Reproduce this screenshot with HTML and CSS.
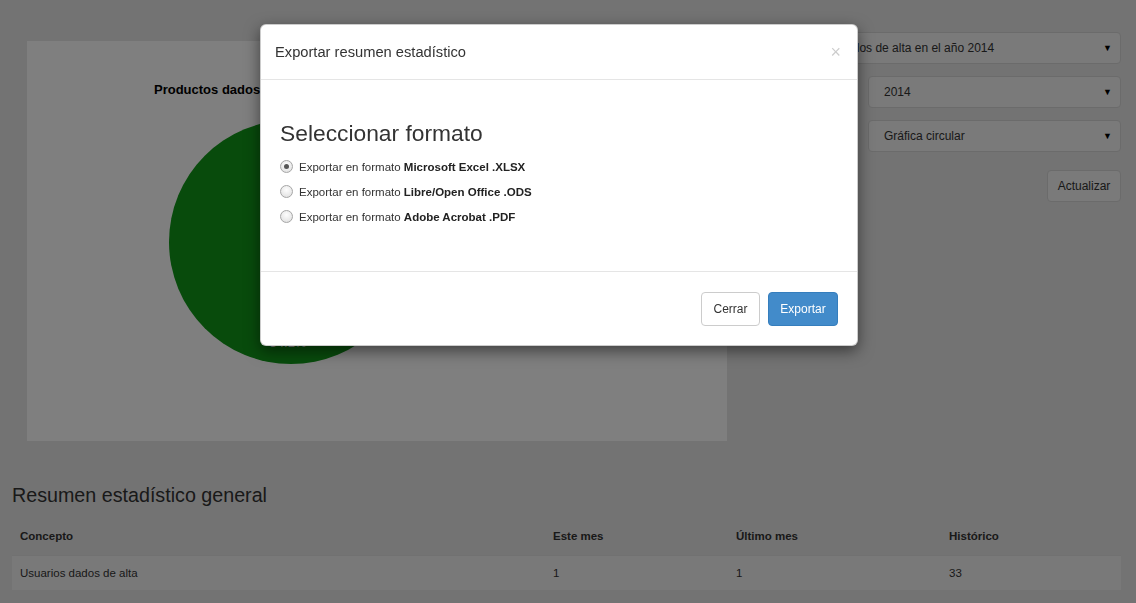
FILE: index.html
```html
<!DOCTYPE html>
<html lang="es">
<head>
<meta charset="utf-8">
<title>Resumen estadístico</title>
<link rel="stylesheet" href="styles.css">
</head>
<body>
<div class="page">
  <div class="top">
    <div class="chart-panel">
      <div class="chart-title">Productos dados de alta en el año 2014</div>
      <svg class="pie" width="700" height="300" viewBox="0 0 700 300">
        <circle cx="264" cy="120" r="122" fill="#109618"/>
        <text x="261" y="225" class="pie-label">34.1%</text>
      </svg>
    </div>
    <div class="side">
      <div class="select wide"><span>Productos dados de alta en el año 2014</span><span class="arrow">&#9660;</span></div>
      <div class="select"><span>2014</span><span class="arrow">&#9660;</span></div>
      <div class="select"><span>Gráfica circular</span><span class="arrow">&#9660;</span></div>
      <div class="btn-gray">Actualizar</div>
    </div>
  </div>
  <h2 class="summary-title">Resumen estadístico general</h2>
  <table class="stats">
    <thead>
      <tr><th class="c1">Concepto</th><th class="c2">Este mes</th><th class="c3">Último mes</th><th class="c4">Histórico</th></tr>
    </thead>
    <tbody>
      <tr class="striped"><td>Usuarios dados de alta</td><td>1</td><td>1</td><td>33</td></tr>
    </tbody>
  </table>
</div>

<div class="backdrop"></div>

<div class="modal">
  <div class="modal-header">
    <span class="close">&times;</span>
    <span class="modal-title">Exportar resumen estadístico</span>
  </div>
  <div class="modal-body">
    <h3 class="format-title">Seleccionar formato</h3>
    <div class="options">
      <label class="option"><span class="radio checked"></span><span>Exportar en formato <b>Microsoft Excel .XLSX</b></span></label>
      <label class="option"><span class="radio"></span><span>Exportar en formato <b>Libre/Open Office .ODS</b></span></label>
      <label class="option"><span class="radio"></span><span>Exportar en formato <b>Adobe Acrobat .PDF</b></span></label>
    </div>
  </div>
  <div class="modal-footer">
    <span class="btn btn-default">Cerrar</span>
    <span class="btn btn-primary">Exportar</span>
  </div>
</div>
</body>
</html>
```
FILE: styles.css
```css
* { box-sizing: border-box; }
html, body { margin: 0; padding: 0; }
body {
  background: #e6e6e6;
  font-family: "Liberation Sans", Arial, sans-serif;
  font-size: 11.5px;
  color: #333;
  width: 1136px;
  height: 603px;
  overflow: hidden;
}
.page { padding: 0 15px 0 12px; }
.top { display: flex; padding-top: 32px; }
.chart-panel {
  margin-left: 15px;
  margin-top: 9px;
  width: 700px;
  height: 400px;
  background: #fff;
}
.chart-title {
  font-weight: bold;
  font-size: 13px;
  color: #000;
  padding: 41px 0 0 127px;
  line-height: 16px;
}
.pie { display: block; margin-top: 24px; }
.pie-label { fill: #fff; font-family: "Liberation Sans", Arial, sans-serif; font-size: 13px; text-anchor: middle; }
.side {
  margin-left: auto;
  display: flex;
  flex-direction: column;
  align-items: flex-end;
  width: 355px;
}
.select {
  width: 253px;
  height: 32px;
  display: flex;
  align-items: center;
  justify-content: space-between;
  padding: 0 8px 0 15px;
  background: #f4f4f4;
  border: 1px solid #d6d6d6;
  border-radius: 4px;
  color: #333;
  font-size: 12px;
  margin-bottom: 12px;
}
.select.wide { width: 355px; }
.arrow { font-size: 9px; color: #000; }
.btn-gray {
  margin-top: 6px;
  width: 74px;
  height: 32px;
  display: flex;
  align-items: center;
  justify-content: center;
  background: #f4f4f4;
  border: 1px solid #d6d6d6;
  border-radius: 4px;
  font-size: 12px;
  color: #333;
}
.summary-title {
  margin: 43px 0 12px 0;
  font-size: 19.7px;
  line-height: 22px;
  font-weight: normal;
  color: #333;
}
.stats { width: 1109px; border-collapse: collapse; }
.stats th, .stats td { text-align: left; padding: 0 8px; font-size: 11.5px; color: #333; }
.stats th { height: 37px; font-weight: bold; }
.stats td { height: 35px; border-top: 1px solid #e2e2e2; }
.stats .c1 { width: 533px; }
.stats .c2 { width: 183px; }
.stats .c3 { width: 213px; }
.stats .c4 { width: 180px; }
.striped td { background: #f2f2f2; }

.backdrop {
  position: fixed;
  inset: 0;
  background: rgba(0, 0, 0, 0.5);
}
.modal {
  position: absolute;
  top: 24px;
  left: 260px;
  width: 598px;
  background: #fff;
  border: 1px solid rgba(0, 0, 0, 0.2);
  border-radius: 6px;
  box-shadow: 0 5px 15px rgba(0, 0, 0, 0.5);
}
.modal-header {
  padding: 14px 15px 15px 14px;
  border-bottom: 1px solid #e5e5e5;
  height: 55px;
  display: flex;
  flex-direction: row-reverse;
  justify-content: space-between;
  align-items: center;
}
.modal-title { font-size: 14.7px; line-height: 24px; color: #333; }
.close {
  font-size: 18px;
  line-height: 18px;
  color: #000;
  opacity: 0.2;
  margin-right: 1px;
}
.modal-body { padding: 20px 20px 20px 19px; height: 191px; }
.format-title {
  margin: 20px 0 8px 0;
  font-size: 22.8px;
  line-height: 26px;
  font-weight: normal;
  color: #333;
}
.options { display: flex; flex-direction: column; }
.option { display: flex; align-items: center; height: 25px; font-size: 11.5px; color: #333; }
.option b { color: #222; }
.radio {
  width: 13px;
  height: 13px;
  border-radius: 50%;
  border: 1px solid #a6a6a6;
  background: radial-gradient(circle at 50% 35%, #fdfdfd 0%, #e6e6e6 70%, #d8d8d8 100%);
  margin-right: 6px;
  position: relative;
  flex: none;
}
.radio.checked::after {
  content: "";
  position: absolute;
  left: 3px;
  top: 3px;
  width: 5px;
  height: 5px;
  border-radius: 50%;
  background: #555;
}
.modal-footer {
  border-top: 1px solid #e5e5e5;
  padding: 20px 19px 19px 20px;
  display: flex;
  justify-content: flex-end;
  gap: 8px;
}
.btn {
  height: 34px;
  display: flex;
  align-items: center;
  justify-content: center;
  border-radius: 4px;
  font-size: 12px;
  border: 1px solid transparent;
}
.btn-default { width: 59px; border-color: #ccc; color: #333; background: #fff; }
.btn-primary { width: 70px; background: #428bca; border-color: #357ebd; color: #fff; }
```
